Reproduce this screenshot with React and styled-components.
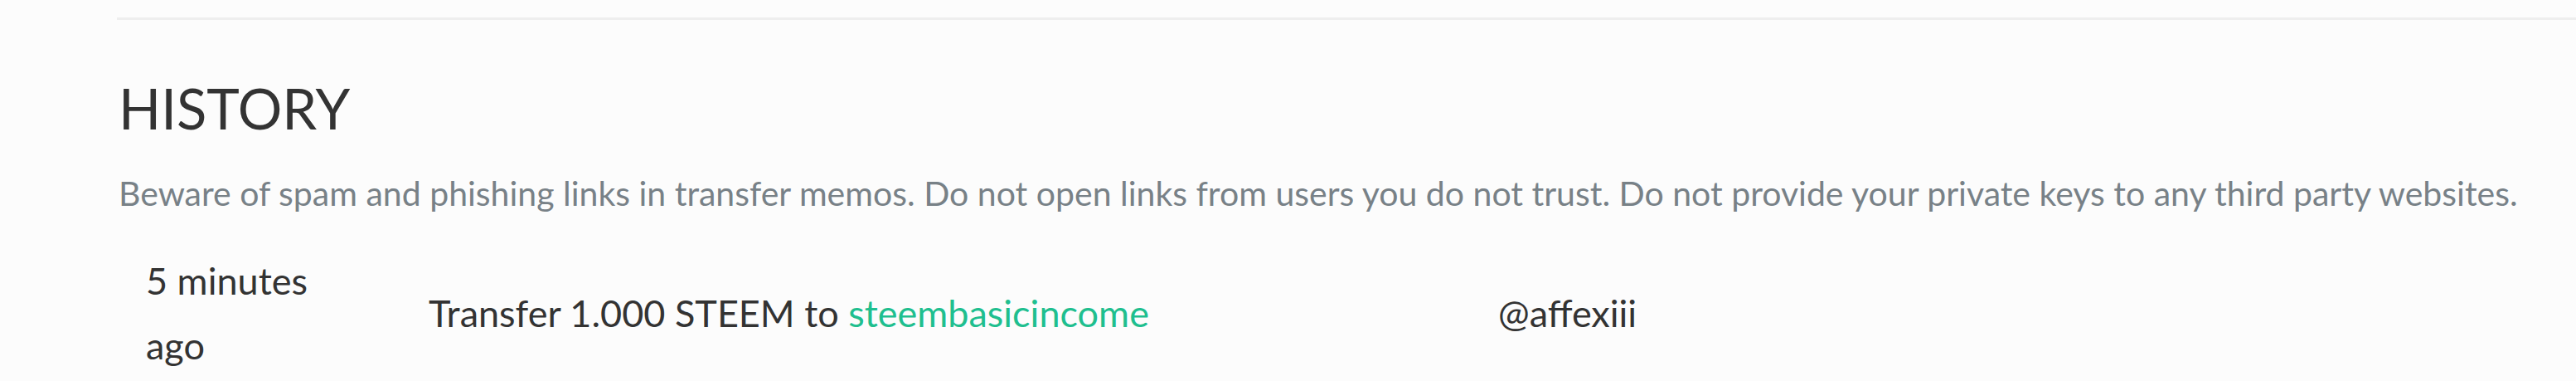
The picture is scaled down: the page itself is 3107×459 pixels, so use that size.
import React from 'react';
import styled, { createGlobalStyle } from 'styled-components';

const GlobalStyle = createGlobalStyle`
  html, body {
    margin: 0;
    padding: 0;
    background: #fcfcfc;
  }
  body {
    font-family: Lato, 'Open Sans', sans-serif;
    color: #333333;
  }
`;

const Page = styled.div`
  padding-left: 141px;
  padding-top: 21px;
  height: 459px;
  box-sizing: border-box;
  overflow: hidden;
`;

const Divider = styled.hr`
  margin: 0;
  border: none;
  border-top: 3px solid #eeeeee;
`;

const Section = styled.section`
  padding-top: 64px;
`;

const Title = styled.h4`
  margin: 0;
  font-size: 67px;
  line-height: 84px;
  font-weight: 400;
  color: #333333;
  padding-left: 2px;
`;

const Notice = styled.p`
  margin: 36px 0 0;
  font-size: 41px;
  line-height: 49px;
  color: #788187;
  padding-left: 2px;
  white-space: nowrap;
`;

const Row = styled.div`
  display: grid;
  grid-template-columns: 341px 1290px 1fr;
  align-items: center;
  margin-top: 42px;
  padding-left: 35px;
  font-size: 45px;
  line-height: 78px;
  color: #333333;
`;

const Time = styled.div`
  max-width: 230px;
`;

const Op = styled.div``;

const Account = styled.a`
  color: #1fbf8f;
  text-decoration: none;
`;

const Memo = styled.div``;

const transfers = [
  { time: '5 minutes ago', amount: '1.000 STEEM', to: 'steembasicincome', memo: '@affexiii' },
];

export default function App() {
  return (
    <>
      <GlobalStyle />
      <Page>
        <Divider />
        <Section>
          <Title>HISTORY</Title>
          <Notice>
            Beware of spam and phishing links in transfer memos. Do not open links from users you do not
            trust. Do not provide your private keys to any third party websites.
          </Notice>
          {transfers.map((t) => (
            <Row key={t.time}>
              <Time>{t.time}</Time>
              <Op>
                Transfer {t.amount} to <Account href="#">{t.to}</Account>
              </Op>
              <Memo>{t.memo}</Memo>
            </Row>
          ))}
        </Section>
      </Page>
    </>
  );
}
